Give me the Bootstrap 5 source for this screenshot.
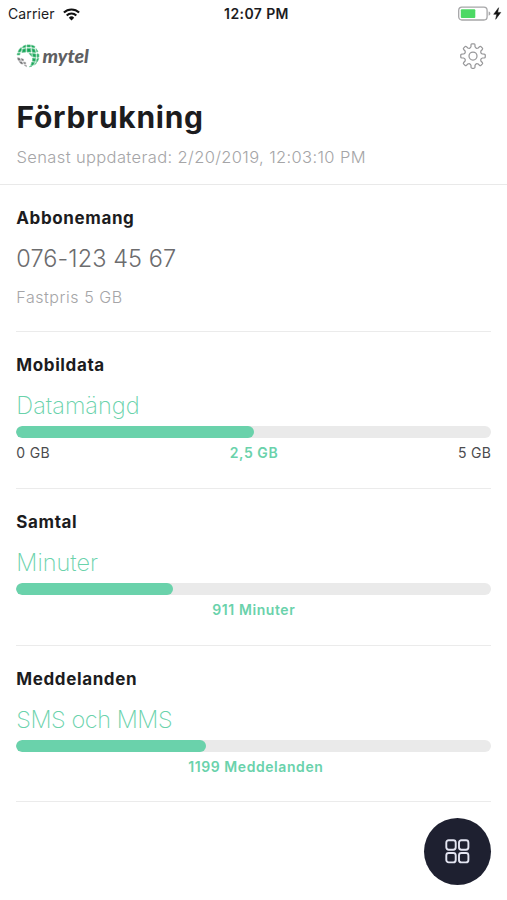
<!DOCTYPE html>
<html lang="sv">
<head>
<meta charset="utf-8">
<meta name="viewport" content="width=device-width, initial-scale=1">
<title>Förbrukning</title>
<link href="https://cdn.jsdelivr.net/npm/bootstrap@5.3.0/dist/css/bootstrap.min.css" rel="stylesheet">
<style>
body{font-family:Inter,"Liberation Sans",sans-serif;color:#1c1c1e;background:#fff;height:900px;overflow:hidden}
svg{display:block}
.status-bar{height:28px;padding:0 5px 0 8px;font-size:14px;line-height:28px}
.carrier{letter-spacing:.1px}
.status-side{flex:1 1 0}
.clock{font-size:14px;font-weight:600;letter-spacing:.4px;padding-left:3px}
.brand-bar{height:56px;padding:0 20px 0 16px}
.brand-name{font-family:Lato,sans-serif;font-weight:900;font-style:italic;font-size:19.5px;line-height:24px;margin-left:2.5px;color:#606062}
.page-head{height:101px;padding:14px 16.5px 0;border-bottom:1px solid #e9e9e9}
.page-title{font-size:30px;line-height:38px;font-weight:700;letter-spacing:.7px;margin:0 0 11px}
.updated{font-size:16.5px;line-height:20px;font-weight:300;letter-spacing:.37px;color:#a5a5a7;margin:0}
.usage{margin:0 15.7px 0 16.3px;padding-top:23px;height:157px;border-bottom:1px solid #ebebeb}
.usage:last-child{height:156px}
.usage.plan{height:147px}
.usage h2{font-size:17px;line-height:20px;font-weight:700;letter-spacing:.62px;margin:0 0 16px}
.kind{font-size:23.5px;line-height:30px;font-weight:250;color:#6ad2ab;margin:0 0 5px}
.kind.tight{letter-spacing:-.45px}
.phone{font-size:23.5px;line-height:30px;font-weight:300;letter-spacing:.1px;color:#6c6c6e;margin:0 0 13px}
.plan-name{font-size:16px;line-height:20px;font-weight:300;letter-spacing:.55px;color:#a5a5a7}
.usage .progress{height:12px;border-radius:6px;background:#eaeaea}
.usage .progress-bar{border-radius:6px;background:#6ad2ab}
.scale{font-size:14px;line-height:20px;margin-top:5px;letter-spacing:.3px;color:#4c4c4e}
.scale strong{font-weight:600;letter-spacing:.57px;color:#6ad2ab}
.scale.messages{padding-left:4px}
.menu-btn{width:67px;height:67px;background:#1e2030;margin:15.5px 16px 0 auto}
</style>
<script src="https://cdn.jsdelivr.net/npm/bootstrap@5.3.0/dist/js/bootstrap.bundle.min.js"></script>
</head>
<body>
<div class="status-bar d-flex align-items-center">
  <div class="status-side d-flex align-items-center"><span class="carrier">Carrier</span>
    <svg class="ms-2" width="17" height="13" viewBox="0 0 17 13" fill="none" stroke="#111" stroke-width="2.1"><path d="M.9 4.6a10.8 10.8 0 0 1 15.2 0M3.7 7.5a6.8 6.8 0 0 1 9.6 0"/><path d="M5.8 9.7a3.8 3.8 0 0 1 5.4 0L8.5 12.5z" fill="#111" stroke="none"/></svg>
  </div>
  <div class="clock">12:07 PM</div>
  <div class="status-side d-flex align-items-center justify-content-end">
    <svg width="44" height="16" viewBox="0 0 44 16"><rect x=".7" y="1.2" width="28.4" height="12.8" rx="3.2" fill="#fff" stroke="#a6a6a8" stroke-width="1.3"/><rect x="2.8" y="3.2" width="14.5" height="8.8" rx="1" fill="#4cd964"/><path d="M30.6 5.5v4.2c1.2-.4 1.8-1.1 1.8-2.1s-.6-1.7-1.8-2.1z" fill="#a6a6a8"/><path d="M40.6 1.7 35.7 8.3h3l-1 5 5.1-6.9h-3.1z" fill="#111" stroke="#111" stroke-width=".5"/></svg>
  </div>
</div>
<header class="brand-bar d-flex align-items-center justify-content-between">
  <div class="d-flex align-items-center">
    <svg width="24" height="24" viewBox="0 0 24 24" stroke-width=".7">
      <g fill="#18a558" stroke="#6cc795">
        <path d="M7 2.3 9.8 1v2.2L6.5 4zM11 .9h3.4v2.2H11zM15.6 1l3.4 1.5-.6 1.6-2.9-1z"/>
        <path d="m3.3 5.2 2-1.7.3 2.2-1.1 2.4H2zM6.7 5.2 9.8 4.6v3.5l-3.9.3zM11 4.5h3.6l.4 3.6h-4zM15.8 4.5l3 .8.8 3.2-3.3-.3zM20 4.6l2 2.9-1.2.6z"/>
        <path d="M1.5 9.2h2.6l-.3 1.7H1.1zM13 9.4l2.4.2.4 2.8zM16.5 9.5l3.4.5v3.3l-3.1-.6zM21 9.8l1.9.4v2.9l-1.8.3z"/>
        <path d="m16.6 14 3.2.5-.6 3-2.8-.5zM21 14.7l1.8-.3-1.3 3.2-1.2.2zM15.9 18l2.8.5-1.5 2.7-2.4.2zM19.7 18.8l1.2-.2-2.4 2.3zM14.2 22l1.8.1-2.6.8z"/>
      </g>
      <g fill="#606062" stroke="#b0b0b2"><path d="m1.4 13.8 2.3.3.9 2.4-2.5-.2zM5 14.4l2.6.9-.3 1.7-1.6-.4zM3 17.5l2.6.2 1.7 2.3-2.1-.1zM7.4 18l2.3.4v1.7l-1.3-.1zM8.3 21.1l2 .2.2 1.4z"/></g>
    </svg>
    <span class="brand-name">mytel</span>
  </div>
  <svg width="28" height="28" viewBox="0 0 28 28" fill="none" stroke="#98989a" stroke-width="1.25" stroke-linejoin="round"><path id="gear"/><circle cx="14" cy="14" r="4"/></svg>
</header>
<section class="page-head">
  <h1 class="page-title">Förbrukning</h1>
  <p class="updated">Senast uppdaterad: 2/20/2019, 12:03:10 PM</p>
</section>
<main>
  <section class="usage plan">
    <h2>Abbonemang</h2>
    <div class="phone">076-123 45 67</div>
    <div class="plan-name">Fastpris 5 GB</div>
  </section>
  <section class="usage">
    <h2>Mobildata</h2>
    <div class="kind">Datamängd</div>
    <div class="progress"><div class="progress-bar" style="width:50%"></div></div>
    <div class="scale d-flex justify-content-between"><span>0 GB</span><strong>2,5 GB</strong><span>5 GB</span></div>
  </section>
  <section class="usage">
    <h2>Samtal</h2>
    <div class="kind">Minuter</div>
    <div class="progress"><div class="progress-bar" style="width:33%"></div></div>
    <div class="scale text-center"><strong>911 Minuter</strong></div>
  </section>
  <section class="usage">
    <h2>Meddelanden</h2>
    <div class="kind tight">SMS och MMS</div>
    <div class="progress"><div class="progress-bar" style="width:40%"></div></div>
    <div class="scale messages text-center"><strong>1199 Meddelanden</strong></div>
  </section>
</main>
<button class="menu-btn btn rounded-circle border-0 p-0 d-flex align-items-center justify-content-center" aria-label="Meny">
  <svg width="25" height="25" viewBox="0 0 25 25" fill="none" stroke="#e4e5f2" stroke-width="1.9"><rect x="1.3" y="1.3" width="9.4" height="9.4" rx="2.4"/><rect x="14" y="1.3" width="9.4" height="9.4" rx="2.4"/><rect x="1.3" y="14" width="9.4" height="9.4" rx="2.4"/><rect x="14" y="14" width="9.4" height="9.4" rx="2.4"/></svg>
</button>
<script>
// Eight-toothed gear outline with rounded valleys
(function(){
  var d='',c=14,p=function(r,a){a=a*Math.PI/180;return (c+r*Math.cos(a)).toFixed(2)+' '+(c+r*Math.sin(a)).toFixed(2)};
  for(var i=0;i<8;i++){var a=i*45-90;
    d+=(i?'L':'M')+p(9.6,a-12)+'L'+p(11.4,a-10)+'Q'+p(12.3,a-9)+' '+p(12.3,a-5)+'L'+p(12.3,a+5)+'Q'+p(12.3,a+9)+' '+p(11.4,a+10)+'L'+p(9.6,a+12)+'Q'+p(7.6,a+22.5)+' '+p(9.6,a+33);}
  document.getElementById('gear').setAttribute('d',d+'Z');
})();
</script>
</body>
</html>
